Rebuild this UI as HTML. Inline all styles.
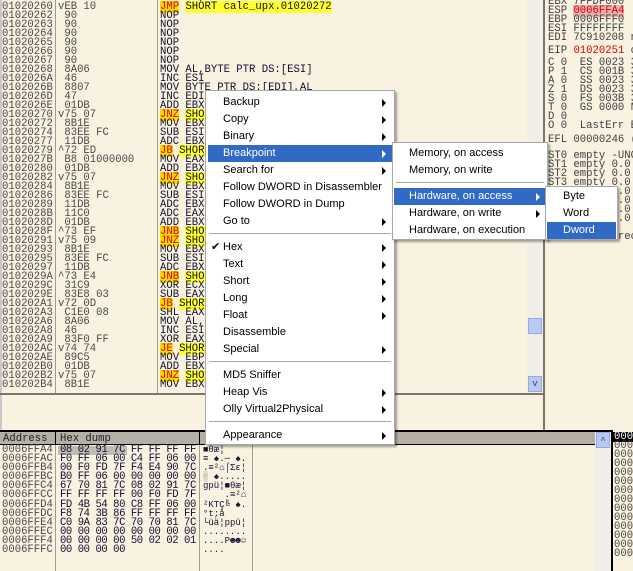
<!DOCTYPE html>
<html><head><meta charset="utf-8"><style>
*{margin:0;padding:0;box-sizing:border-box}
body{width:633px;height:571px;overflow:hidden;background:#F9F2E0;position:relative;font-family:"Liberation Mono",monospace}
.m{position:absolute;font-size:10.6px;line-height:9px;white-space:pre;color:#4a4a4a}
.d{color:#101030}
.y{background:#FFFF30;color:#101010}
.j{background:#FFD800;color:#E00000}
.ab{position:absolute}
.menu{position:absolute;background:#fff;border:1px solid #A8A8A8;box-shadow:2px 2px 2px rgba(0,0,0,.35);font-family:"Liberation Sans",sans-serif;font-size:11px;color:#000}
.it{position:absolute;left:0;right:0;height:17px;line-height:17px}
.it span{position:absolute}
.hl{background:#316AC5;color:#fff}
.ar{position:absolute;width:0;height:0;border-top:4px solid transparent;border-bottom:4px solid transparent;border-left:4px solid #000;top:5px}
.hl .ar{border-left-color:#fff}
.sep{position:absolute;height:1px;background:#ACA899}
</style></head><body>
<div class="ab" style="left:0;top:0;width:2px;height:430px;background:#c8c8c8"></div>
<div class="ab" style="left:55px;top:0;width:1px;height:393px;background:#A09C90"></div>
<div class="ab" style="left:157px;top:0;width:1px;height:393px;background:#A09C90"></div>
<div class="m" style="left:2px;top:-6px">01020258
01020260
01020262
01020263
01020264
01020265
01020266
01020267
01020268
0102026A
0102026B
0102026D
0102026E
01020270
01020272
01020274
01020277
01020279
0102027B
01020280
01020282
01020284
01020286
01020289
0102028B
0102028D
0102028F
01020291
01020293
01020295
01020297
0102029A
0102029C
0102029E
010202A1
010202A3
010202A6
010202A8
010202A9
010202AC
010202AE
010202B0
010202B2
010202B4</div>
<div class="m" style="left:58px;top:-6px"> 8A06
vEB 10
 90
 90
 90
 90
 90
 90
 8A06
 46
 8807
 47
 01DB
v75 07
 8B1E
 83EE FC
 11DB
^72 ED
 B8 01000000
 01DB
v75 07
 8B1E
 83EE FC
 11DB
 11C0
 01DB
^73 EF
v75 09
 8B1E
 83EE FC
 11DB
^73 E4
 31C9
 83E8 03
v72 0D
 C1E0 08
 8A06
 46
 83F0 FF
v74 74
 89C5
 01DB
v75 07
 8B1E</div>
<div class="m d" style="left:160px;top:-6px">MOV AL,BYTE
<span class="j">JMP</span> <span class="y">SHORT calc_upx.01020272</span>
NOP
NOP
NOP
NOP
NOP
NOP
MOV AL,BYTE PTR DS:[ESI]
INC ESI
MOV BYTE PTR DS:[EDI],AL
INC EDI
ADD EBX,EBX
<span class="j">JNZ</span> <span class="y">SHORT</span>
MOV EBX
SUB ESI
ADC EBX
<span class="j">JB</span> <span class="y">SHORT</span>
MOV EAX
ADD EBX
<span class="j">JNZ</span> <span class="y">SHORT</span>
MOV EBX
SUB ESI
ADC EBX
ADC EAX
ADD EBX
<span class="j">JNB</span> <span class="y">SHORT</span>
<span class="j">JNZ</span> <span class="y">SHORT</span>
MOV EBX
SUB ESI
ADC EBX
<span class="j">JNB</span> <span class="y">SHORT</span>
XOR ECX
SUB EAX
<span class="j">JB</span> <span class="y">SHORT</span>
SHL EAX
MOV AL,
INC ESI
XOR EAX
<span class="j">JE</span> <span class="y">SHORT</span>
MOV EBP
ADD EBX
<span class="j">JNZ</span> <span class="y">SHORT</span>
MOV EBX</div>
<div class="ab" style="left:527px;top:0;width:16px;height:393px;background:#F0EEE6"></div>
<div class="ab" style="left:528px;top:318px;width:14px;height:16px;background:#B9C8F5;border:1px solid #98A8E0"></div>
<div class="ab" style="left:528px;top:376px;width:14px;height:16px;background:#B9C8F5;border:1px solid #98A8E0;color:#304080;font-size:9px;text-align:center;line-height:14px">v</div>
<div class="ab" style="left:0;top:393px;width:544px;height:2px;background:#7A766C"></div>
<div class="ab" style="left:543px;top:0;width:2px;height:430px;background:#7A766C"></div>
<div class="m" style="left:548px;top:-2px;color:#404040">EBX 7FFDF000
ESP <span style="background:#E8B0B0;color:#E00000">0006FFA4</span>
EBP 0006FFF0
ESI FFFFFFFF
EDI 7C910208 n</div>
<div class="m" style="left:548px;top:47px;color:#404040">EIP <span style="color:#E00000">01020251</span> c</div>
<div class="m" style="left:548px;top:59px;color:#404040">C 0  ES 0023 3
P 1  CS 001B 3
A 0  SS 0023 3
Z 1  DS 0023 3
S 0  FS 003B 3
T 0  GS 0000 N
D 0
O 0  LastErr E</div>
<div class="m" style="left:548px;top:136px;color:#404040">EFL 00000246 (</div>
<div class="m" style="left:548px;top:152px;color:#404040">ST0 empty -UNO
ST1 empty 0.0
ST2 empty 0.0
ST3 empty 0.0
ST4 empty 0.0
ST5 empty 0.0
ST6 empty 0.0
ST7 empty 0.0
               nd
FCW 027F  Prec</div>
<div class="ab" style="left:0;top:430px;width:612px;height:2px;background:#000"></div>
<div class="ab" style="left:0;top:432px;width:595px;height:13px;background:#B4B0A8;border-bottom:1px solid #000"></div>
<div class="ab" style="left:55px;top:432px;width:1px;height:13px;background:#000"></div>
<div class="ab" style="left:199px;top:432px;width:1px;height:13px;background:#000"></div>
<div class="m" style="left:3px;top:435px;color:#202020">Address</div>
<div class="m" style="left:60px;top:435px;color:#202020">Hex dump</div>
<div class="ab" style="left:55px;top:445px;width:1px;height:126px;background:#A09C90"></div>
<div class="ab" style="left:199px;top:445px;width:1px;height:126px;background:#A09C90"></div>
<div class="ab" style="left:252px;top:445px;width:1px;height:126px;background:#A09C90"></div>
<div class="ab" style="left:58px;top:446px;width:69px;height:9px;background:#C0BCB4"></div>
<div class="m" style="left:2px;top:446px;line-height:9.1px">0006FFA4
0006FFAC
0006FFB4
0006FFBC
0006FFC4
0006FFCC
0006FFD4
0006FFDC
0006FFE4
0006FFEC
0006FFF4
0006FFFC</div>
<div class="m d" style="left:60px;top:446px;line-height:9.1px;letter-spacing:-0.45px">08 02 91 7C FF FF FF FF
F0 FF 06 00 C4 FF 06 00
00 F0 FD 7F F4 E4 90 7C
B0 FF 06 00 00 00 00 00
67 70 81 7C 08 02 91 7C
FF FF FF FF 00 F0 FD 7F
FD 4B 54 80 C8 FF 06 00
F8 74 3B 86 FF FF FF FF
C0 9A 83 7C 70 70 81 7C
00 00 00 00 00 00 00 00
00 00 00 00 50 02 02 01
00 00 00 00</div>
<div class="m d" style="left:203px;top:446px;line-height:9.1px;font-size:9px">■θæ¦
≡ ♠.─ ♠.
.≡²⌂⌠Σε¦
░ ♠.....
gpü¦■θæ¦
    .≡²⌂
²KTÇ╚ ♠.
°t;å
└üä¦ppü¦
........
....P☻☻☺
....</div>
<div class="ab" style="left:595px;top:432px;width:16px;height:139px;background:#F0EEE6"></div>
<div class="ab" style="left:596px;top:432px;width:14px;height:16px;background:#B9C8F5;border:1px solid #98A8E0;color:#304080;font-size:9px;text-align:center;line-height:16px">^</div>
<div class="ab" style="left:611px;top:430px;width:2px;height:141px;background:#000"></div>
<div class="ab" style="left:613px;top:432px;width:20px;height:10px;background:#000"></div>
<div class="m" style="left:614px;top:433px"><span style="color:#fff">0006</span>
0006
0006
0006
0006
0006
0006
0006
0006
0006
0006
0006
0006
0006</div>
<div class="menu" style="left:205px;top:90px;width:190px;height:355px">
<div class="it" style="top:3px"><span style="left:17px">Backup</span><i class="ar" style="right:8px"></i></div>
<div class="it" style="top:20px"><span style="left:17px">Copy</span><i class="ar" style="right:8px"></i></div>
<div class="it" style="top:37px"><span style="left:17px">Binary</span><i class="ar" style="right:8px"></i></div>
<div class="it hl" style="top:54px;left:2px;right:2px"><span style="left:15px">Breakpoint</span><i class="ar" style="right:6px"></i></div>
<div class="it" style="top:71px"><span style="left:17px">Search for</span><i class="ar" style="right:8px"></i></div>
<div class="it" style="top:88px"><span style="left:17px">Follow DWORD in Disassembler</span></div>
<div class="it" style="top:105px"><span style="left:17px">Follow DWORD in Dump</span></div>
<div class="it" style="top:122px"><span style="left:17px">Go to</span><i class="ar" style="right:8px"></i></div>
<div class="sep" style="top:142px;left:3px;right:3px"></div>
<div class="it" style="top:148px"><span style="left:5px">✔</span><span style="left:17px">Hex</span><i class="ar" style="right:8px"></i></div>
<div class="it" style="top:165px"><span style="left:17px">Text</span><i class="ar" style="right:8px"></i></div>
<div class="it" style="top:182px"><span style="left:17px">Short</span><i class="ar" style="right:8px"></i></div>
<div class="it" style="top:199px"><span style="left:17px">Long</span><i class="ar" style="right:8px"></i></div>
<div class="it" style="top:216px"><span style="left:17px">Float</span><i class="ar" style="right:8px"></i></div>
<div class="it" style="top:233px"><span style="left:17px">Disassemble</span></div>
<div class="it" style="top:250px"><span style="left:17px">Special</span><i class="ar" style="right:8px"></i></div>
<div class="sep" style="top:270px;left:3px;right:3px"></div>
<div class="it" style="top:276px"><span style="left:17px">MD5 Sniffer</span></div>
<div class="it" style="top:293px"><span style="left:17px">Heap Vis</span><i class="ar" style="right:8px"></i></div>
<div class="it" style="top:310px"><span style="left:17px">Olly Virtual2Physical</span><i class="ar" style="right:8px"></i></div>
<div class="sep" style="top:330px;left:3px;right:3px"></div>
<div class="it" style="top:336px"><span style="left:17px">Appearance</span><i class="ar" style="right:8px"></i></div>
</div>
<div class="menu" style="left:392px;top:142px;width:156px;height:98px">
<div class="it" style="top:2px"><span style="left:16px">Memory, on access</span></div>
<div class="it" style="top:19px"><span style="left:16px">Memory, on write</span></div>
<div class="sep" style="top:39px;left:3px;right:3px"></div>
<div class="it hl" style="top:45px;left:1px;right:2px"><span style="left:15px">Hardware, on access</span><i class="ar" style="right:5px"></i></div>
<div class="it" style="top:62px"><span style="left:16px">Hardware, on write</span><i class="ar" style="right:7px"></i></div>
<div class="it" style="top:79px"><span style="left:16px">Hardware, on execution</span></div>
</div>
<div class="menu" style="left:545px;top:186px;width:73px;height:54px">
<div class="it" style="top:1px"><span style="left:17px">Byte</span></div>
<div class="it" style="top:18px"><span style="left:17px">Word</span></div>
<div class="it hl" style="top:35px;left:1px;right:1px"><span style="left:16px">Dword</span></div>
</div>
</body></html>
